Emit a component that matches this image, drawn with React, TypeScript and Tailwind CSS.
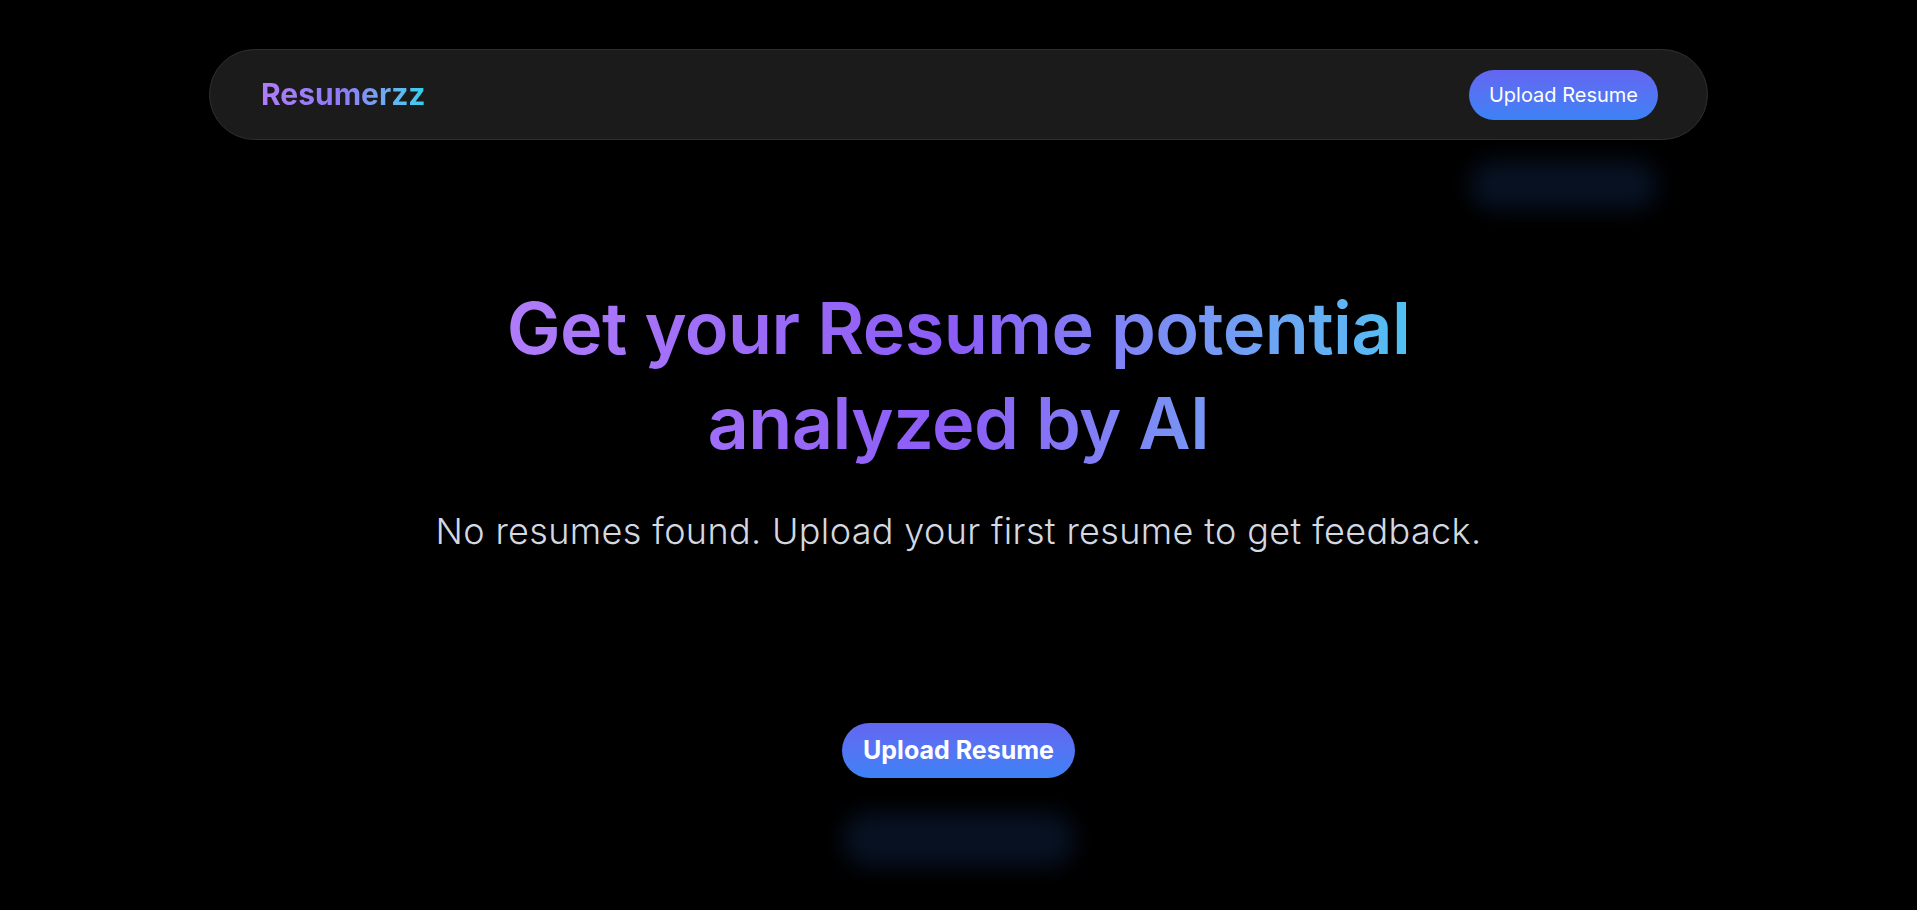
import React from 'react';

const font = { fontFamily: 'Inter, "Noto Sans", sans-serif' };

function UploadButton({ big }: { big?: boolean }) {
    return (
        <button
            className={`rounded-full bg-gradient-to-b from-[#6366f1] to-[#3b82f6] text-white cursor-pointer ${
                big
                    ? 'h-[55px] px-[21px] text-[25px] font-bold shadow-[0_89px_22px_rgba(59,130,246,0.14)]'
                    : 'h-[50px] px-[20px] text-[20px] font-normal shadow-[0_90px_22px_rgba(59,130,246,0.14)]'
            }`}
        >
            Upload Resume
        </button>
    );
}

export default function App() {
    return (
        <main className="min-h-screen bg-black flex flex-col items-center pt-[49px]" style={font}>
            {/* Navbar */}
            <nav className="w-[1499px] h-[91px] rounded-full bg-[#1b1b1b] border border-[#2f2f2f] flex items-center justify-between pl-[51px] pr-[49px]">
                <span className="text-[30px] font-bold bg-gradient-to-r from-[#b07cf9] via-[#8b7cf6] to-[#22d3ee] bg-clip-text text-transparent">
                    Resumerzz
                </span>
                <UploadButton />
            </nav>

            {/* Hero */}
            <section className="flex flex-col items-center mt-[140px]">
                <h1 className="text-[72px] leading-[95px] font-semibold tracking-[-0.008em] text-center bg-gradient-to-r from-[#b07cf9] via-[#8b5cf6] to-[#4fc0f2] bg-clip-text text-transparent">
                    Get your Resume potential
                    <br />
                    analyzed by AI
                </h1>
                <p className="mt-[41px] text-[36px] leading-[40px] font-light text-[#d4d8e0] tracking-[0.01em]">
                    No resumes found. Upload your first resume to get feedback.
                </p>
                <div className="mt-[172px]">
                    <UploadButton big />
                </div>
            </section>
        </main>
    );
}
